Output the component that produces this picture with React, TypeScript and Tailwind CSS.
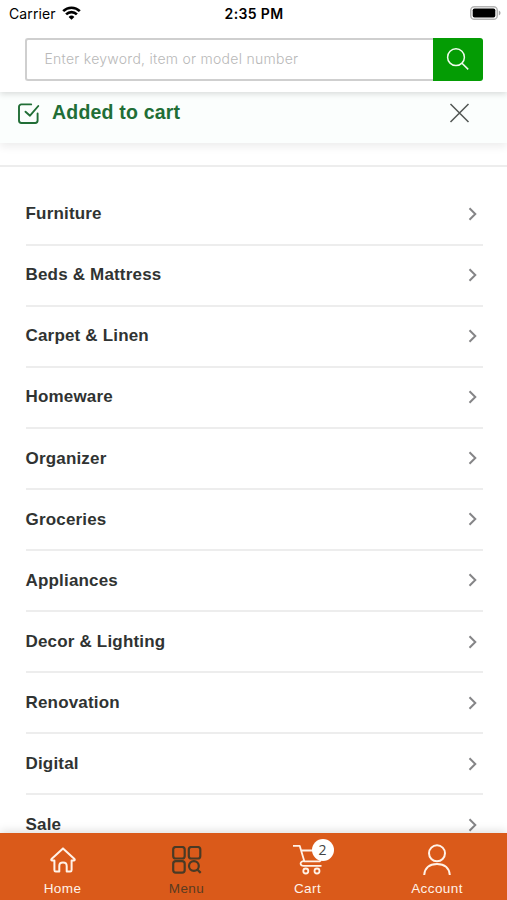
import React from 'react';

const categories = [
  'Furniture',
  'Beds & Mattress',
  'Carpet & Linen',
  'Homeware',
  'Organizer',
  'Groceries',
  'Appliances',
  'Decor & Lighting',
  'Renovation',
  'Digital',
  'Sale',
];

function StatusBar() {
  return (
    <div className="grid grid-cols-3 items-center h-7 pl-[9px] pr-[6px] font-['Inter',sans-serif] text-black">
      <div className="flex items-center gap-[6px] -mt-[2px] text-[14px] tracking-[0.1px]">
        Carrier
        <svg width="19" height="14" viewBox="0 0 19 14" fill="none" stroke="black" strokeWidth="2.6">
          <path d="M1.2 5.2a11.7 11.7 0 0 1 16.6 0" />
          <path d="M4.1 8.4a7.6 7.6 0 0 1 10.8 0" />
          <path d="M9.5 13.8 6.6 10.9a4.1 4.1 0 0 1 5.8 0z" fill="black" stroke="none" />
        </svg>
      </div>
      <div className="-ml-[2px] -mt-[2px] text-center text-[14px] font-semibold tracking-[0.35px]">2:35 PM</div>
      <div className="flex justify-end -mt-[2px]">
        <svg width="31" height="14" viewBox="0 0 31 14">
          <rect x="0.75" y="0.75" width="26.5" height="12.5" rx="3.6" fill="none" stroke="#b4b4b4" strokeWidth="1.5" />
          <rect x="2.7" y="2.5" width="22.6" height="9" rx="1.8" fill="black" />
          <path d="M28.8 4.6v4.8c1-.4 1.7-1.3 1.7-2.4s-.7-2-1.7-2.4z" fill="#a5a5a5" />
        </svg>
      </div>
    </div>
  );
}

function SearchBar() {
  return (
    <div className="flex h-[43px] mt-[9.5px] ml-[25px] mr-[24px]">
      <div className="flex-1 flex items-center border-2 border-r-0 border-[#cfcfcf] rounded-l-[3px] pl-[17.5px] pb-[2px] text-[14px] font-light tracking-[0.27px] text-[#b8b8b8] font-['Inter',sans-serif]">
        Enter keyword, item or model number
      </div>
      <button className="w-[50px] flex items-center justify-center rounded-r-[3px] bg-[#049c04]">
        <svg className="-mt-[1px]" width="24" height="24" viewBox="0 0 24 24" fill="none" stroke="#f1fbee" strokeWidth="1.5">
          <circle cx="10" cy="10.2" r="8.4" />
          <path d="m16 16.2 6.2 6.2" />
        </svg>
      </button>
    </div>
  );
}

function Toast() {
  return (
    <div className="relative z-10 flex justify-between h-[51px] pl-[17px] pr-[37px] bg-[#fbfefd] shadow-[0_4px_8px_rgba(0,0,0,0.07)]">
      <div className="flex items-start text-[#216e36]">
        <svg className="mt-[10px]" width="24" height="24" viewBox="0 0 24 24" fill="none" stroke="currentColor" strokeWidth="1.9" strokeLinecap="round" strokeLinejoin="round">
          <path d="M14.2 2.4H4.4A2.4 2.4 0 0 0 2 4.8v13.8a2.4 2.4 0 0 0 2.4 2.4h13.8a2.4 2.4 0 0 0 2.4-2.4V11.5" />
          <path d="m8.5 9.7 4.5 4L21.3 4" />
        </svg>
        <span className="ml-[11px] mt-[6px] text-[19.5px] leading-[28px] font-bold tracking-[0.2px]">Added to cart</span>
      </div>
      <svg className="mt-[10px]" width="22" height="22" viewBox="0 0 22 22" fill="none" stroke="#505552" strokeWidth="1.5">
        <path d="m2.5 2 18 18M20.5 2l-18 18" />
      </svg>
    </div>
  );
}

function CategoryList() {
  return (
    <ul className="ml-[25.5px] mr-[24.5px] pt-[17.45px]">
      {categories.map((name) => (
        <li
          key={name}
          className="flex items-center justify-between h-[61.09px] border-b-2 border-[#ededed] pr-[4.5px] text-[17px] font-bold tracking-[0.18px] text-[#303332]"
        >
          {name}
          <svg width="10" height="14" viewBox="0 0 10 14" fill="none" stroke="#858587" strokeWidth="2">
            <path d="m1.5 1.2 5.8 5.8-5.8 5.8" />
          </svg>
        </li>
      ))}
    </ul>
  );
}

function HomeIcon() {
  return (
    <svg width="26" height="26" viewBox="0 0 26 26" fill="none" stroke="currentColor" strokeWidth="2" strokeLinecap="round" strokeLinejoin="round">
      <path d="M13 1.4 1.5 12.1c-.5.6-.1 1.3.6 1.3h2.3V23c0 .9.5 1.5 1.4 1.5h3.5V19c0-2.2 1.5-3.4 3.7-3.4s3.7 1.2 3.7 3.4v5.5h3.5c.9 0 1.4-.6 1.4-1.5v-9.6h2.3c.7 0 1.1-.7.6-1.3z" />
    </svg>
  );
}

function MenuIcon() {
  return (
    <svg width="30" height="28" viewBox="0 0 30 28" fill="none" stroke="currentColor" strokeWidth="2.2">
      <rect x="1.2" y="1" width="11.5" height="11.5" rx="2.6" />
      <rect x="16.8" y="1" width="11.5" height="11.5" rx="2.6" />
      <rect x="1.2" y="15.2" width="11.5" height="11.5" rx="2.6" />
      <circle cx="21.9" cy="20" r="4.9" />
      <path d="m25.3 23.5 3.4 3.4" />
    </svg>
  );
}

function CartIcon() {
  return (
    <svg width="30" height="32" viewBox="0 0 30 32" fill="none" stroke="currentColor" strokeWidth="1.8" strokeLinejoin="round">
      <path d="M0 2.8h6.7l4.7 15.6h15.8M8.2 7.5H29l-1.8 11" />
      <path d="M11 18.2c-2.2-.1-3.5 1.2-3.4 2.5.1 1.3 1.4 2.1 3.1 2.1h17.8" />
      <circle cx="12.8" cy="28" r="2.5" />
      <circle cx="24" cy="28" r="2.5" />
    </svg>
  );
}

function AccountIcon() {
  return (
    <svg width="28" height="32" viewBox="0 0 28 32" fill="none" stroke="currentColor" strokeWidth="2">
      <circle cx="14" cy="9.3" r="8" />
      <path d="M1.2 31C1.7 24.5 6 20 14 20s12.3 4.5 12.8 11" />
    </svg>
  );
}

function TabBar() {
  return (
    <nav className="relative z-10 shrink-0 grid grid-cols-[125px_123px_119px_140px] h-[67px] bg-[#da5a1a] text-[#fff2e8] text-[13.5px] leading-4 tracking-[0.4px] shadow-[0_-2px_9px_rgba(0,0,0,0.13)]">
      <div className="flex flex-col items-center">
        <div className="h-[48px] pt-[13.5px]">
          <HomeIcon />
        </div>
        Home
      </div>
      <div className="flex flex-col items-center text-[#5b3b20]">
        <div className="h-[48px] pt-[13px] text-[#493a25]">
          <MenuIcon />
        </div>
        Menu
      </div>
      <div className="flex flex-col items-center">
        <div className="relative h-[48px] pt-[10px]">
          <CartIcon />
          <span className="absolute left-[19px] top-[6px] w-[22px] h-[22px] rounded-full bg-white text-[#434343] text-[14px] leading-[22px] text-center tracking-normal font-['Open_Sans',sans-serif]">
            2
          </span>
        </div>
        Cart
      </div>
      <div className="flex flex-col items-center">
        <div className="h-[48px] pt-[11px]">
          <AccountIcon />
        </div>
        Account
      </div>
    </nav>
  );
}

export default function App() {
  return (
    <div className="flex flex-col w-full h-screen overflow-hidden bg-white font-['Liberation_Sans',sans-serif]">
      <header className="relative z-20 shrink-0 h-[92px] bg-white shadow-[0_2px_6px_rgba(0,0,0,0.14)]">
        <StatusBar />
        <SearchBar />
      </header>
      <main className="flex-1 min-h-0 overflow-hidden">
        <Toast />
        <div className="h-[24px] border-b-2 border-[#ededed]" />
        <CategoryList />
      </main>
      <TabBar />
    </div>
  );
}
